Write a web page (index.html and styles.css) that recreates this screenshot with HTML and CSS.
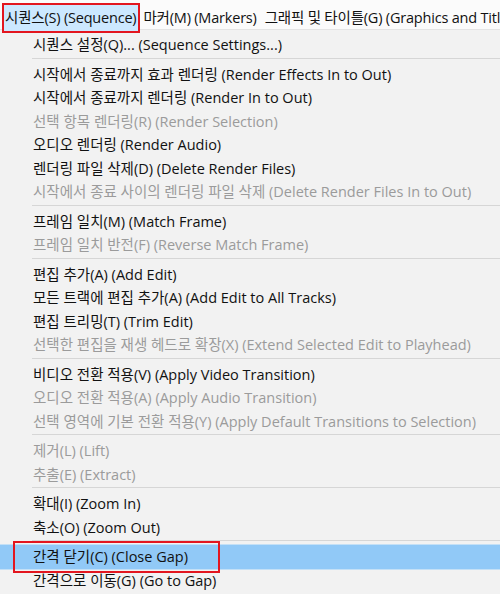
FILE: index.html
```html
<!DOCTYPE html>
<html lang="ko">
<head>
  <meta charset="UTF-8">
  <title>시퀀스 메뉴</title>
  <link rel="stylesheet" href="styles.css">
</head>
<body>
  <div class="menubar">
    <span class="bar-item open">시퀀스(S) (Sequence)</span>
    <span class="bar-item">마커(M) (Markers)</span>
    <span class="bar-item">그래픽 및 타이틀(G) (Graphics and Titles)</span>
  </div>

  <div class="menu">
    <div class="item">시퀀스 설정(Q)... (Sequence Settings...)</div>
    <div class="sep"></div>
    <div class="item">시작에서 종료까지 효과 렌더링 (Render Effects In to Out)</div>
    <div class="item">시작에서 종료까지 렌더링 (Render In to Out)</div>
    <div class="item off">선택 항목 렌더링(R) (Render Selection)</div>
    <div class="item">오디오 렌더링 (Render Audio)</div>
    <div class="item">렌더링 파일 삭제(D) (Delete Render Files)</div>
    <div class="item off">시작에서 종료 사이의 렌더링 파일 삭제 (Delete Render Files In to Out)</div>
    <div class="sep"></div>
    <div class="item">프레임 일치(M) (Match Frame)</div>
    <div class="item off">프레임 일치 반전(F) (Reverse Match Frame)</div>
    <div class="sep"></div>
    <div class="item">편집 추가(A) (Add Edit)</div>
    <div class="item">모든 트랙에 편집 추가(A) (Add Edit to All Tracks)</div>
    <div class="item">편집 트리밍(T) (Trim Edit)</div>
    <div class="item off">선택한 편집을 재생 헤드로 확장(X) (Extend Selected Edit to Playhead)</div>
    <div class="sep"></div>
    <div class="item">비디오 전환 적용(V) (Apply Video Transition)</div>
    <div class="item off">오디오 전환 적용(A) (Apply Audio Transition)</div>
    <div class="item off">선택 영역에 기본 전환 적용(Y) (Apply Default Transitions to Selection)</div>
    <div class="sep"></div>
    <div class="item off">제거(L) (Lift)</div>
    <div class="item off">추출(E) (Extract)</div>
    <div class="sep"></div>
    <div class="item">확대(I) (Zoom In)</div>
    <div class="item">축소(O) (Zoom Out)</div>
    <div class="sep"></div>
    <div class="item hover">간격 닫기(C) (Close Gap)<span class="mark"></span></div>
    <div class="item">간격으로 이동(G) (Go to Gap)</div>
  </div>
</body>
</html>
```

FILE: styles.css
```css
* {
  box-sizing: border-box;
  margin: 0;
  padding: 0;
}

body {
  width: 500px;
  height: 594px;
  overflow: hidden;
  background: #f2f2f2;
  font-family: 'Open Sans', 'Noto Sans CJK KR', sans-serif;
  font-size: 14.5px;
  color: #111;
}

.menubar {
  height: 29px;
  display: flex;
  align-items: flex-start;
  padding-top: 5px;
  background: #fbfbfb;
  white-space: nowrap;
}

.bar-item {
  padding: 0 3px 0 5px;
  line-height: 26px;
  letter-spacing: -0.2px;
}

.bar-item.open {
  margin-left: 4px;
  padding: 0 2px 0 1px;
  background: #cce8ff;
  outline: 2px solid #e3161f;
}

.menu {
  display: flex;
  flex-direction: column;
  padding-top: 3px;
  border-top: 1px solid #e4e4e4;
  white-space: nowrap;
}

.item {
  height: 23.5px;
  line-height: 23.5px;
  padding-left: 33px;
}

.item.off {
  color: #9b9b9b;
}

.item.hover {
  position: relative;
  background: #91c9f7;
  box-shadow: 0 -1px 0 #c4e0f6, 0 1px 0 #c4e0f6;
}

.mark {
  position: absolute;
  left: 13px;
  top: -4px;
  width: 207px;
  height: 32px;
  border: 2px solid #e3161f;
}

.sep {
  height: 1px;
  margin: 1px 0 4px 32px;
  background: #d6d6d6;
}
```
